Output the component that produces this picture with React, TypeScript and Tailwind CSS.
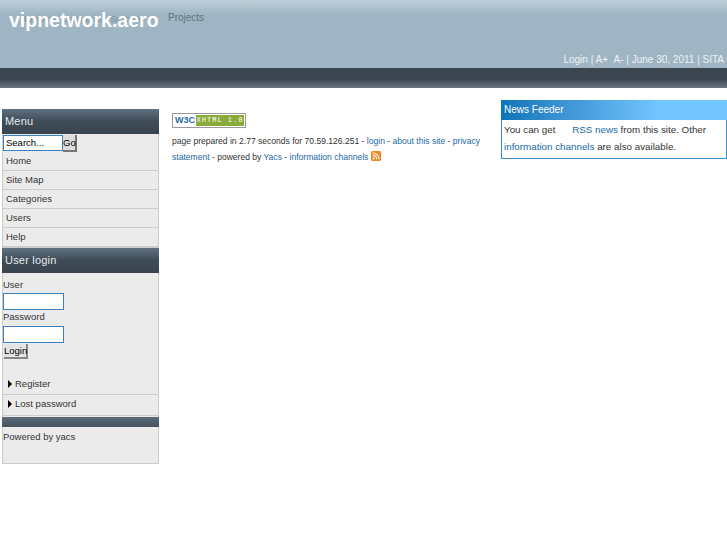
const font = { fontFamily: '"Liberation Sans", Arial, sans-serif' };

const menuItems = ['Home', 'Site Map', 'Categories', 'Users', 'Help'];

function SideTitle({ children }: { children: string }) {
  return (
    <div className="h-[25px] bg-gradient-to-b from-[#5f7180] via-[#3f4c58] to-[#38434e] pl-[3px] text-[11px] leading-[24px] tracking-[0.2px] text-[#e4e9ec]">
      {children}
    </div>
  );
}

function Arrow() {
  return <span className="mr-[3px] inline-block h-0 w-0 border-y-[4px] border-l-[4px] border-y-transparent border-l-black" />;
}

function RssIcon() {
  return (
    <svg viewBox="0 0 10 10" className="ml-[3px] inline-block h-[10px] w-[10px] align-[-1px]">
      <rect width="10" height="10" rx="1.5" fill="#f08a24" />
      <circle cx="2.6" cy="7.4" r="1" fill="#fff" />
      <path d="M1.8 4.4a3.8 3.8 0 0 1 3.8 3.8M1.8 2a6.2 6.2 0 0 1 6.2 6.2" fill="none" stroke="#fff" strokeWidth="1.1" />
    </svg>
  );
}

export default function App() {
  return (
    <div className="min-h-[545px] bg-white text-[9.5px] text-[#333]" style={font}>
      <div className="relative flex h-[68px] items-end justify-end bg-[linear-gradient(#bfd0db,#9fb5c3_14px)] pb-[1px] pr-[3px] text-[10px] leading-[14px] text-[#eef2f4]">
        <div className="absolute left-[24px] top-[12px] text-[9px] leading-[14px] text-[#7d8e99]">Projects &nbsp;Categories &nbsp;Sections</div>
        <div className="absolute left-[9px] top-[9px] text-[19.5px] font-bold leading-[22px] text-white">vipnetwork.aero</div>
        <div className="absolute left-[168px] top-[11px] text-[10px] leading-[14px] text-[#66747e]">Projects</div>
        Login | A+ &nbsp;A- | June 30, 2011 | SITA
      </div>
      <div className="h-[20px] bg-[linear-gradient(#3a4550_0,#3a4550_11px,#6d7680_100%)]" />

      <div className="flex">
        <div className="ml-[2px] mt-[21px] w-[157px] shrink-0">
          <SideTitle>Menu</SideTitle>
          <div className="border-x border-[#ccc] bg-[#ebebeb] pt-[1px]">
            <div className="flex h-[17px] items-start">
              <div className="h-[16px] w-[60px] border border-[#3b80c0] bg-white pl-[2px] leading-[14px] text-black">Search...</div>
              <div className="h-[17px] w-[14px] border-r-2 border-b-2 border-[#777] bg-[#ddd] text-center leading-[15px] text-black">Go</div>
            </div>
            {menuItems.map((m) => (
              <div key={m} className="h-[19px] border-b border-[#ccc] pl-[3px] leading-[17px] text-[#333]">{m}</div>
            ))}
          </div>
          <div className="h-[1px] bg-[#ccc]" />
          <SideTitle>User login</SideTitle>
          <div className="border-x border-[#ccc] bg-[#ebebeb] pb-[1px]">
            <div className="pt-[5px] leading-[14px]">User</div>
            <div className="mt-[1px] h-[17px] w-[61px] border border-[#3b80c0] bg-white" />
            <div className="mb-[2px] leading-[14px]">Password</div>
            <div className="h-[17px] w-[61px] border border-[#3b80c0] bg-white" />
            <div className="ml-[1px] mt-[1px] h-[15px] w-[24px] border-r-2 border-b-2 border-[#888] bg-[#e4e4e4] text-center leading-[13px] text-black">Login</div>
            <div className="mt-[16px] flex h-[20px] items-center border-b border-[#ccc] pb-[1px] pl-[5px]"><Arrow />Register</div>
            <div className="flex h-[21px] items-center border-b border-[#ccc] pb-[2px] pl-[5px]"><Arrow />Lost password</div>
          </div>
          <div className="h-[10px] bg-gradient-to-b from-[#5b6b79] to-[#45525e]" />
          <div className="h-[37px] border-x border-b border-[#ccc] bg-[#ebebeb] pt-[3px] leading-[14px]">Powered by yacs</div>
        </div>

        <div className="ml-[13px] mt-[25px] w-[316px] shrink-0 text-[8.55px] leading-[16px]">
          <div className="flex h-[15px] w-[74px] border border-[#999] bg-white p-[1px]">
            <div className="w-[22px] text-center text-[9px] font-bold leading-[11px] text-[#2a6aa8]">W3C</div>
            <div className="flex-1 bg-[#8aab3a] text-center font-mono text-[7px] leading-[11px] tracking-[1px] text-white">XHTML 1.0</div>
          </div>
          <div className="mt-[5px]">
            page prepared in 2.77 seconds for 70.59.126.251 - <span className="text-[#1b6aa5]">login</span> - <span className="text-[#1b6aa5]">about this site</span> - <span className="text-[#1b6aa5]">privacy statement</span> - powered by <span className="text-[#1b6aa5]">Yacs</span> - <span className="text-[#1b6aa5]">information channels</span>
            <RssIcon />
          </div>
        </div>

        <div className="ml-[13px] mt-[12px] w-[226px] shrink-0">
          <div className="h-[20px] bg-gradient-to-r from-[#0a74b8] to-[#72c5ff] to-70% pl-[3px] text-[10px] leading-[19px] text-white">News Feeder</div>
          <div className="h-[39px] border-x border-b border-[#3b8fcc] px-[2px] pt-[1px] text-[9.8px] leading-[17px]">
            You can get <span className="ml-[14px] text-[#1b6aa5]">RSS news</span> from this site. Other <span className="text-[#1b6aa5]">information channels</span> are also available.
          </div>
        </div>
      </div>
    </div>
  );
}
